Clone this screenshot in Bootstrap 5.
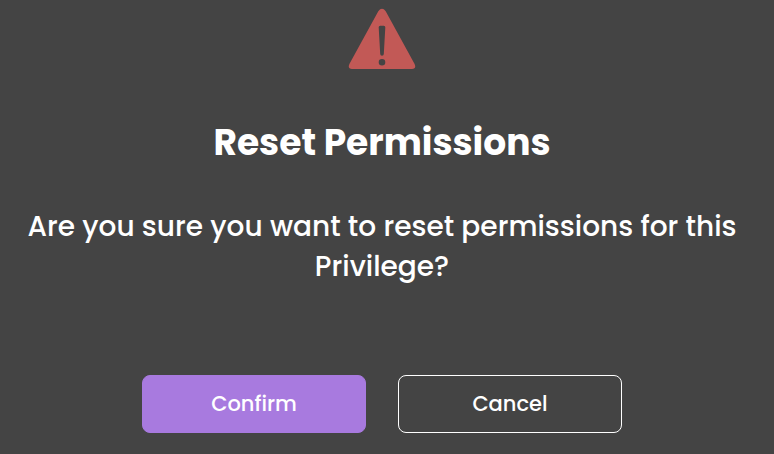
<!DOCTYPE html>
<html lang="en">
<head>
<meta charset="utf-8">
<meta name="viewport" content="width=device-width, initial-scale=1">
<title>Reset Permissions</title>
<link href="https://cdn.jsdelivr.net/npm/bootstrap@5.3.0/dist/css/bootstrap.min.css" rel="stylesheet">
<style>
body { background: #444; font-family: Poppins, Inter, "Open Sans", sans-serif; }
.dialog-pane { width: 764px; height: 454px; padding-top: 8px; }
.warning-icon { width: 68px; height: 62px; }
.dialog-title { font-size: 36px; line-height: 54px; margin-top: 46px; }
.dialog-message { font-size: 28px; line-height: 40px; margin-top: 37px; }
.dialog-actions { gap: 32px; margin-top: 88px; }
.dialog-btn { width: 224px; height: 58px; padding: 0; border-radius: 8px; font-size: 21px; font-weight: 500; color: #fff; }
.dialog-btn:hover { color: #fff; }
.btn-confirm, .btn-confirm:hover { background: #a87adf; border-color: #a87adf; }
.btn-cancel, .btn-cancel:hover { border-color: #fff; }
</style>
</head>
<body class="overflow-hidden">
<main class="dialog-pane d-flex flex-column align-items-center text-center text-white">
  <svg class="warning-icon flex-shrink-0" viewBox="0 0 68 62" aria-hidden="true">
    <path fill="#c25956" fill-rule="evenodd" d="M30.300 3.200Q34-1.600 37.700 3.200L66.600 56Q68.700 61 64 61H4Q-.7 61 1.400 56ZM32.200 17.800Q30.600 17.800 30.700 19.500L32.200 46Q32.300 47.800 34 47.800T35.800 46L37.300 19.500Q37.400 17.800 35.800 17.800ZM34 50.900a3.300 3.300 0 1 0 0 6.600a3.300 3.300 0 0 0 0-6.600Z"/>
  </svg>
  <h1 class="dialog-title fw-bold mb-0">Reset Permissions</h1>
  <p class="dialog-message fw-medium mb-0">Are you sure you want to reset permissions for this<br>Privilege?</p>
  <div class="dialog-actions d-flex">
    <button type="button" class="btn dialog-btn btn-confirm">Confirm</button>
    <button type="button" class="btn dialog-btn btn-cancel">Cancel</button>
  </div>
</main>
<script src="https://cdn.jsdelivr.net/npm/bootstrap@5.3.0/dist/js/bootstrap.bundle.min.js"></script>
</body>
</html>
